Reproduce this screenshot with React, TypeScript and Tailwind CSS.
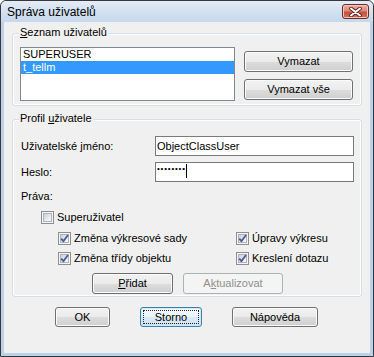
import React from "react";

function Btn({
  children,
  w,
  h = 21,
  disabled = false,
  focused = false,
}: {
  children: React.ReactNode;
  w: string;
  h?: number;
  disabled?: boolean;
  focused?: boolean;
}) {
  if (disabled) {
    return (
      <div
        className={`${w} h-[21px] shrink-0 rounded-[3px] border border-[#adb2b5] bg-[#f4f4f4] flex items-center justify-center text-[#8f8f8f]`}
      >
        {children}
      </div>
    );
  }
  if (focused) {
    return (
      <div
        className={`${w} ${h === 20 ? "h-[20px]" : "h-[21px]"} shrink-0 rounded-[3px] border border-[#3c7fb1] bg-[linear-gradient(to_bottom,#f4f9fd_0%,#eaf3fa_50%,#dae9f5_51%,#cfe2f1_100%)] shadow-[inset_0_0_0_1px_#c9e9fb] p-[2px] flex`}
      >
        <div className="flex-1 border border-dotted border-[#222] flex items-center justify-center">
          {children}
        </div>
      </div>
    );
  }
  return (
    <div
      className={`${w} ${h === 20 ? "h-[20px]" : "h-[21px]"} shrink-0 rounded-[3px] border border-[#707070] bg-[linear-gradient(to_bottom,#f2f2f2_0%,#ebebeb_50%,#dddddd_51%,#cfcfcf_100%)] shadow-[inset_0_0_0_1px_#fbfbfb] flex items-center justify-center`}
    >
      {children}
    </div>
  );
}

function Check({ checked }: { checked: boolean }) {
  return (
    <span className="relative w-[13px] h-[13px] shrink-0 border border-[#8f8f8f] bg-[#f4f4f4] p-[1px] flex">
      <span className="flex-1 border border-[#b0b4ba] bg-[linear-gradient(135deg,#cbcfd5_0%,#eef0f2_70%,#f8f8f8_100%)]" />
      {checked && (
        <svg
          className="absolute left-[0px] top-[0px]"
          width="11"
          height="11"
          viewBox="0 0 11 11"
        >
          <path
            d="M2.2 5.6 L4.4 8.2 L9 2"
            fill="none"
            stroke="#4a5f97"
            strokeWidth="1.9"
            strokeLinejoin="round"
          />
        </svg>
      )}
    </span>
  );
}

function CheckRow({ checked, label, w }: { checked: boolean; label: string; w?: string }) {
  return (
    <div className={`flex items-center h-[13px] ${w ?? ""}`}>
      <Check checked={checked} />
      <span className="ml-[3px] leading-[13px] whitespace-nowrap">{label}</span>
    </div>
  );
}

export default function App() {
  return (
    <div className="w-[374px] h-[357px] flex flex-col border border-[#383838] rounded-t-[6px] bg-[#bcd1ea] font-['Liberation_Sans',Arial,sans-serif] text-[11px] text-black overflow-hidden">
      {/* Title bar */}
      <div className="h-[21px] shrink-0 flex items-center pl-[6px] pr-[4px] bg-[linear-gradient(to_bottom,#e4edf8_0%,#d3e1f1_50%,#c6d8ed_100%)] rounded-t-[5px]">
        <span className="text-[12px] leading-[14px]">Správa uživatelů</span>
        <div className="ml-auto w-[27px] h-[15px] rounded-[3px] border border-[#6f2a22] bg-[linear-gradient(to_bottom,#eab0a4_0%,#dc8a7a_45%,#c8503d_55%,#d0705c_100%)] shadow-[inset_0_0_0_1px_#f3c7bd] flex items-center justify-center">
          <svg width="13" height="10" viewBox="0 0 13 10">
            <path
              d="M2 1.5 L11 8.5 M11 1.5 L2 8.5"
              stroke="#5a1d16"
              strokeWidth="3.6"
              strokeLinecap="round"
            />
            <path
              d="M2 1.5 L11 8.5 M11 1.5 L2 8.5"
              stroke="#ffffff"
              strokeWidth="2"
              strokeLinecap="round"
            />
          </svg>
        </div>
      </div>

      {/* Client */}
      <div className="flex-1 mx-[3px] mb-[3px] bg-[#f0f0f0] flex flex-col pt-[11px] px-[8px]">
        {/* Group 1 */}
        <div className="relative h-[73px] shrink-0 rounded-[3px] border border-[#d5dfe5] shadow-[inset_0_0_0_1px_#ffffff] pl-[7px] pt-[13px] flex gap-[9px]">
          <span className="absolute left-[6px] top-[-8px] px-[1px] bg-[#f0f0f0] leading-[13px]">
            <span className="underline">S</span>eznam uživatelů
          </span>
          <div className="w-[215px] h-[54px] shrink-0 border border-[#828790] bg-white flex flex-col">
            <div className="h-[13px] leading-[13px] pl-[2px]">SUPERUSER</div>
            <div className="h-[13px] leading-[13px] pl-[2px] bg-[#3399ff] text-white">t_tellm</div>
          </div>
          <div className="flex flex-col pt-[4px] gap-[7px]">
            <Btn w="w-[109px]">Vymazat</Btn>
            <Btn w="w-[109px]">Vymazat vše</Btn>
          </div>
        </div>

        {/* Group 2 */}
        <div className="relative mt-[13px] h-[178px] shrink-0 rounded-[3px] border border-[#d5dfe5] shadow-[inset_0_0_0_1px_#ffffff] flex flex-col">
          <span className="absolute left-[6px] top-[-8px] px-[1px] bg-[#f0f0f0] leading-[13px]">
            Profil <span className="underline">u</span>živatele
          </span>

          <div className="mt-[16px] pl-[8px] flex items-center">
            <span className="w-[134px] shrink-0 leading-[13px]">Uživatelské jméno:</span>
            <div className="w-[199px] h-[20px] border border-[#7a7a7a] bg-white flex items-center pl-[1px] leading-[13px]">
              ObjectClassUser
            </div>
          </div>

          <div className="mt-[6px] pl-[8px] flex items-center">
            <span className="w-[134px] shrink-0 leading-[13px]">Heslo:</span>
            <div className="w-[199px] h-[20px] border border-[#7a7a7a] bg-white flex items-start pl-[1px]">
              <span className="text-[8px] leading-[8px] mt-[2px] tracking-[0.8px]">••••••••</span>
              <span className="w-[1px] h-[14px] bg-black mt-[1px]" />
            </div>
          </div>

          <div className="mt-[8px] pl-[8px] leading-[13px]">Práva:</div>

          <div className="mt-[8px] pl-[28px]">
            <CheckRow checked={false} label="Superuživatel" />
          </div>

          <div className="mt-[8px] pl-[45px] flex">
            <CheckRow checked label="Změna výkresové sady" w="w-[178px]" />
            <CheckRow checked label="Úpravy výkresu" />
          </div>
          <div className="mt-[7px] pl-[45px] flex">
            <CheckRow checked label="Změna třídy objektu" w="w-[178px]" />
            <CheckRow checked label="Kreslení dotazu" />
          </div>

          <div className="mt-[8px] pl-[79px] flex gap-[10px]">
            <Btn w="w-[81px]">
              <span>
                <span className="underline">P</span>řidat
              </span>
            </Btn>
            <Btn w="w-[100px]" disabled>
              <span>
                A<span className="underline">k</span>tualizovat
              </span>
            </Btn>
          </div>
        </div>

        {/* Bottom buttons */}
        <div className="mt-[10px] pl-[43px] flex gap-[30px]">
          <Btn w="w-[55px]" h={20}>OK</Btn>
          <Btn w="w-[62px]" h={20} focused>Storno</Btn>
          <Btn w="w-[86px]" h={20}>Nápověda</Btn>
        </div>
      </div>
    </div>
  );
}
